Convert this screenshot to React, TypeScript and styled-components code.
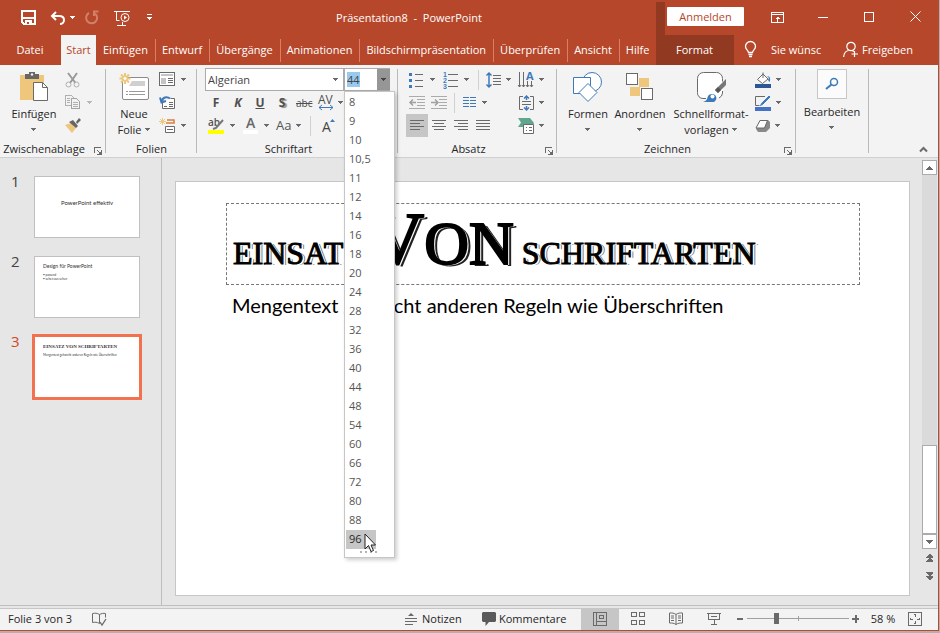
import React, { useEffect, useRef, useState } from "react";
import styled, { createGlobalStyle, css } from "styled-components";

const red = "#b7472a";
const darkRed = "#923921";
const ink = "#262626";
const grey = "#6a6a6a";
const blue = "#3f7ab8";
const sand = "#eec77c";

const GlobalStyle = createGlobalStyle`
  * { box-sizing: border-box; }
  body { margin: 0; background: #b4b0ae; }
  body, button, input, select {
    font-family: "Open Sans", "Noto Sans", sans-serif;
    font-size: 11px;
    color: ${ink};
  }
  button, input, select { margin: 0; padding: 0; border: 0; background: none; border-radius: 0; }
  svg { display: block; flex: none; overflow: visible; }
`;

/* ---------- window ---------- */

const Desktop = styled.div`
  min-height: 100vh;
  display: flex;
  padding: 0 1px 2px 0;
`;
const Window = styled.div`
  flex: 1;
  min-width: 0;
  display: flex;
  flex-direction: column;
  background: #e6e6e6;
  border: solid #c0452a;
  border-width: 0 1px 1px 0;
`;

/* ---------- title bar ---------- */

const TitleBar = styled.header`
  display: flex;
  height: 35px;
  background: ${red};
  color: #fff;
`;
const QuickAccess = styled.div`
  display: flex;
  align-items: center;
  width: 162px;
  padding-left: 21px;
`;
const QuickButton = styled.button<{ $w: number }>`
  display: flex;
  align-items: center;
  gap: 4px;
  width: ${(p) => p.$w}px;
  height: 28px;
  color: #fff;
`;
const Title = styled.h1`
  flex: 1;
  margin: 0;
  font-size: 11px;
  font-weight: 400;
  line-height: 35px;
  text-align: center;
  white-space: pre;
`;
const TitleRight = styled.div`
  display: flex;
  align-items: flex-end;
`;
const ContextStripe = styled.div`
  width: 9px;
  height: 33px;
  background: ${darkRed};
`;
const SignIn = styled.button`
  align-self: flex-start;
  width: 77px;
  height: 19px;
  margin: 7px 10px 0 2px;
  background: #fff;
  color: ${red};
  border-radius: 1px;
  font-size: 11px;
  line-height: 18px;
`;
const WindowButton = styled.button`
  display: grid;
  place-items: center;
  width: 46px;
  height: 35px;
  color: #fff;
`;

/* ---------- tabs ---------- */

const TabRow = styled.div`
  display: flex;
  height: 30px;
  background: ${red};
  color: #fff;
`;
const Tabs = styled.nav`
  flex: 1;
  display: flex;
  align-items: center;
  min-width: 0;
`;
const Tab = styled.button<{ $kind?: "file" | "active" | "context" }>`
  flex: none;
  height: 23px;
  padding: 0 7px 1px 6px;
  color: #fff;
  line-height: 22px;
  white-space: nowrap;
  border-right: 1px solid #dc7d66;
  ${(p) => p.$kind === "file" && css`width: 61px; border: 0;`}
  ${(p) =>
    p.$kind === "active" &&
    css`
      width: 35px;
      height: 30px;
      padding: 0 0 1px;
      margin-right: 1px;
      background: #f3f3f3;
      color: ${red};
      border: 0;
    `}
  ${(p) =>
    p.$kind === "context" &&
    css`
      width: 78px;
      height: 30px;
      background: ${darkRed};
      border: 0;
    `}
`;
const HeaderAction = styled.button<{ $w: number; $gap: number }>`
  display: flex;
  align-items: center;
  gap: ${(p) => p.$gap}px;
  width: ${(p) => p.$w}px;
  padding: 0 12px 1px 10px;
  color: #fff;
  white-space: nowrap;
`;
const Clip = styled.span`
  overflow: hidden;
`;

/* ---------- ribbon ---------- */

const Ribbon = styled.section`
  display: flex;
  height: 93px;
  background: #f3f3f3;
  border-bottom: 1px solid #d0d0d0;
`;
const Group = styled.div<{ $w: number; $pad: number }>`
  position: relative;
  display: flex;
  flex-direction: column;
  width: ${(p) => p.$w}px;
  padding: 3px 0 0 ${(p) => p.$pad}px;
  &::after {
    content: "";
    position: absolute;
    top: 4px;
    right: 0;
    width: 1px;
    height: 84px;
    background: #b9b9b9;
  }
`;
const GroupBody = styled.div`
  display: flex;
  height: 70px;
`;
const GroupFooter = styled.div<{ $pad: number }>`
  display: flex;
  align-items: center;
  justify-content: center;
  height: 19px;
  margin-left: -${(p) => p.$pad}px;
  padding-top: 3px;
`;
const GroupLabel = styled.span`
  flex: 1;
  text-align: center;
  line-height: 16px;
  white-space: nowrap;
`;
const Launcher = styled.button`
  width: 15px;
  height: 12px;
  margin-right: 3px;
  padding: 3px 0 0 6px;
`;
const LargeButton = styled.button<{ $w: number }>`
  display: flex;
  flex-direction: column;
  align-items: center;
  width: ${(p) => p.$w}px;
  line-height: 16px;
  white-space: nowrap;
`;
const LargeIcon = styled.span`
  display: grid;
  place-items: center;
  height: 38px;
`;
const Line = styled.span`
  display: flex;
  align-items: center;
  justify-content: center;
  gap: 3px;
  height: 16px;
`;
const Column = styled.div`
  display: flex;
  flex-direction: column;
`;
const Row = styled.div`
  display: flex;
  align-items: center;
  height: 23px;
`;
const Tool = styled.button<{ $w?: number; $active?: boolean; $gap?: number }>`
  display: flex;
  align-items: center;
  gap: ${(p) => p.$gap ?? 5}px;
  width: ${(p) => p.$w ?? 34}px;
  height: 23px;
  padding-left: 3px;
  background: ${(p) => (p.$active ? "#c6c6c6" : "none")};
`;
const Glyph = styled.span<{ $look?: "bold" | "italic" | "underline" | "shadow" | "strike" }>`
  width: 16px;
  color: #4f4f4f;
  font-size: 12px;
  line-height: 16px;
  text-align: center;
  font-weight: 700;
  ${(p) => p.$look === "italic" && css`font-style: italic;`}
  ${(p) => p.$look === "underline" && css`text-decoration: underline;`}
  ${(p) => p.$look === "shadow" && css`text-shadow: 2px 1px 1px #8a8a8a;`}
  ${(p) => p.$look === "strike" && css`font-size: 10px; font-weight: 400; text-decoration: line-through;`}
`;
const Divider = styled.span<{ $left?: number; $right?: number }>`
  width: 1px;
  height: 20px;
  margin: 0 ${(p) => p.$right ?? 0}px 0 ${(p) => p.$left ?? 0}px;
  background: #d0d0d0;
`;
const Combos = styled.div`
  display: flex;
  height: 23px;
`;
const FontSelectBox = styled.label`
  display: grid;
  grid-template-columns: 1fr 14px;
  align-items: center;
  width: 139px;
  height: 23px;
  background: #fff;
  border: 1px solid #ababab;
`;
const FontSelect = styled.select`
  grid-area: 1 / 1 / 2 / 3;
  height: 21px;
  padding-left: 2px;
  appearance: none;
  color: #444;
`;
const SelectCaret = styled.span`
  grid-area: 1 / 2;
  display: grid;
  place-items: center;
  pointer-events: none;
`;
const SizeBox = styled.div`
  position: relative;
  display: flex;
  width: 46px;
  height: 23px;
  background: #fff;
  border: 1px solid #ababab;
  border-right: 0;
`;
const SizeInput = styled.input`
  flex: 1;
  min-width: 0;
  padding-left: 2px;
  outline: 0;
  color: #444;
  &::selection { background: #99c9ef; color: #444; }
`;
const SizeToggle = styled.button`
  display: grid;
  place-items: center;
  width: 13px;
  background: #969696;
`;
const SizeList = styled.ul`
  position: absolute;
  z-index: 5;
  top: 22px;
  left: -1px;
  width: 51px;
  margin: 0;
  padding: 1px 1px 8px;
  list-style: none;
  background: #fff;
  border: 1px solid #c6c6c6;
  box-shadow: 2px 2px 4px rgba(0, 0, 0, 0.2);
`;
const SizeOption = styled.li<{ $active: boolean }>`
  position: relative;
  width: 30px;
  height: 19px;
  padding-left: 3px;
  line-height: 18px;
  color: ${(p) => (p.$active ? ink : "#555")};
  background: ${(p) => (p.$active ? "#c6c6c6" : "none")};
`;
const Grip = styled.span`
  position: absolute;
  bottom: 4px;
  left: 15px;
`;
const Pointer = styled.span`
  position: absolute;
  z-index: 6;
  top: 3px;
  left: 18px;
`;
const SearchTile = styled.span`
  display: grid;
  place-items: center;
  width: 30px;
  height: 30px;
  margin: 1px 0 5px;
  background: #fbfbfb;
  border: 1px solid #c6c6c6;
`;
const CollapseArea = styled.div`
  flex: 1;
  display: flex;
  align-items: flex-end;
  justify-content: flex-end;
  padding: 0 10px 4px 0;
`;

/* ---------- workspace ---------- */

const Workspace = styled.main`
  flex: 1;
  display: flex;
  margin-bottom: 2px;
  border-bottom: 1px solid #c0c0c0;
`;
const Slides = styled.ol`
  width: 162px;
  margin: 0;
  padding: 18px 0 0;
  list-style: none;
  border-right: 1px solid #bdbdbd;
`;
const SlideItem = styled.li<{ $current?: boolean }>`
  display: flex;
  height: 80px;
  padding-left: 11px;
  color: ${(p) => (p.$current ? "#d24726" : "#444")};
`;
const SlideNumber = styled.span`
  width: 23px;
  font-size: 15px;
  line-height: 10px;
`;
const Thumb = styled.button<{ $current?: boolean }>`
  display: flex;
  flex-direction: column;
  align-items: flex-start;
  width: 106px;
  height: 62px;
  padding: 7px 8px 0;
  background: #fff;
  border: 1px solid ${(p) => (p.$current ? "#f27250" : "#c0c0c0")};
  outline: ${(p) => (p.$current ? "2px solid #f27250" : "0")};
  text-align: left;
  white-space: nowrap;
`;
const ThumbText = styled.span<{ $size: number; $gap?: number; $center?: boolean; $serif?: boolean }>`
  margin-top: ${(p) => p.$gap ?? 0}px;
  align-self: ${(p) => (p.$center ? "center" : "flex-start")};
  font-family: ${(p) => (p.$serif ? '"Liberation Serif", serif' : "Lato, sans-serif")};
  font-weight: ${(p) => (p.$serif ? 700 : 400)};
  font-size: ${(p) => p.$size}px;
  line-height: ${(p) => p.$size}px;
  color: #333;
`;
const Canvas = styled.div`
  flex: 1;
  display: flex;
  padding: 23px 12px 9px 13px;
`;
const Slide = styled.article`
  flex: 1;
  padding: 21px 49px 0 50px;
  background: #fff;
  border: 1px solid #c6c6c6;
  color: #000;
`;
const Headline = styled.h2`
  height: 82px;
  margin: 0;
  padding: 0 6px;
  border: 1px dashed #777;
  font-family: "Liberation Serif", serif;
  font-size: 32px;
  font-weight: 400;
  line-height: 98px;
  white-space: pre;
  -webkit-text-stroke: 1px #000;
  text-shadow: 2px 1px 0 #fff, 3px 1px 0 #777;
`;
const HeadlineBig = styled.span<{ $size: number }>`
  font-size: ${(p) => p.$size}px;
  line-height: 0;
  -webkit-text-stroke: 2px #000;
  text-shadow: 2px 1px 0 #fff, 4px 2px 0 #222;
`;
const BodyText = styled.p`
  margin: 7px 0 0;
  padding: 0 6px;
  font-family: Lato, sans-serif;
  font-size: 20px;
  line-height: 26px;
  white-space: nowrap;
`;
const ScrollBar = styled.div`
  display: flex;
  flex-direction: column;
  align-items: stretch;
  width: 16px;
  padding: 2px 1px 20px 0;
`;
const ScrollButton = styled.button`
  display: grid;
  place-items: center;
  height: 15px;
  background: #fff;
  border: 1px solid #ababab;
`;
const ScrollTrack = styled.div`
  flex: 1;
  display: flex;
  flex-direction: column;
  justify-content: flex-end;
  background: #dadada;
`;
const ScrollThumb = styled.div`
  height: 89px;
  background: #fff;
  border: 1px solid #ababab;
`;
const SlideStep = styled.button`
  display: grid;
  place-items: center;
  height: 18px;
`;

/* ---------- status bar ---------- */

const StatusBar = styled.footer`
  display: flex;
  align-items: center;
  height: 22px;
  padding: 0 11px 0 8px;
  background: #f3f3f3;
  border-top: 1px solid #c6c6c6;
`;
const StatusText = styled.span`
  margin-right: 20px;
  padding-bottom: 2px;
`;
const StatusSpacer = styled.span`
  flex: 1;
`;
const StatusButton = styled.button<{ $w: number; $gap: number }>`
  display: flex;
  align-items: center;
  gap: ${(p) => p.$gap}px;
  width: ${(p) => p.$w}px;
  height: 21px;
  padding-bottom: 2px;
`;
const ViewButton = styled.button<{ $w: number; $active?: boolean }>`
  display: grid;
  place-items: center;
  width: ${(p) => p.$w}px;
  height: 21px;
  padding-bottom: 2px;
  background: ${(p) => (p.$active ? "#c6c6c6" : "none")};
`;
const ZoomSlider = styled.input`
  width: 102px;
  height: 13px;
  margin-bottom: 2px;
  appearance: none;
  background:
    linear-gradient(#a0a0a0, #a0a0a0) center / 1px 5px no-repeat,
    linear-gradient(#a0a0a0, #a0a0a0) center / 100% 1px no-repeat;
  &::-webkit-slider-thumb {
    appearance: none;
    width: 5px;
    height: 11px;
    background: ${grey};
  }
`;
const ZoomValue = styled.output`
  width: 40px;
  padding-bottom: 2px;
  text-align: center;
`;

/* ---------- icons ---------- */

type IconProps = { w: number; h: number; children: React.ReactNode; smooth?: boolean };
const Icon = ({ w, h, children, smooth }: IconProps) => (
  <svg
    width={w}
    height={h}
    viewBox={`0 0 ${w} ${h}`}
    fill="none"
    stroke={grey}
    shapeRendering={smooth ? "auto" : "crispEdges"}
    aria-hidden
  >
    {children}
  </svg>
);

const Caret = ({ color = grey }: { color?: string }) => (
  <Icon w={6} h={4}>
    <path d="M0 0h5v1H0zM1 1h3v1H1zM2 2h1v1H2z" fill={color} stroke="none" />
  </Icon>
);

const SaveIcon = () => (
  <Icon w={15} h={15}>
    <path d="M1 1h13v13H3l-2-2z" stroke="#fff" strokeWidth="2" />
    <path d="M1 7h13v2H1zM4 10h7v5H4z" fill="#fff" stroke="none" />
    <path d="M6 12h2v2H6z" fill={red} stroke="none" />
  </Icon>
);
const UndoIcon = () => (
  <Icon w={16} h={14} smooth>
    <path d="M6 1 2 5l4 4M2 5h7c3 0 5 1.500 5 4s-2 4-4 4" stroke="#fff" strokeWidth="2" />
  </Icon>
);
const RedoIcon = () => (
  <Icon w={15} h={15} smooth>
    <path d="M10 3.500A5.500 5.500 0 1 1 4 3M13.500 1.500H9v4.500" stroke="#d1806a" strokeWidth="2" />
  </Icon>
);
const ShowIcon = () => (
  <Icon w={17} h={16} smooth>
    <path d="M0 1.500h16M2.500 2v8.500h3M3 15.500h9M8.500 12v3" stroke="#fff" />
    <circle cx="11" cy="7.500" r="4" stroke="#fff" />
    <path d="M10 5.500v4l3-2z" fill="#fff" stroke="none" />
  </Icon>
);
const CustomizeIcon = () => (
  <Icon w={6} h={7}>
    <path d="M0 0h5v1H0zM0 3h5v1H0zM1 4h3v1H1zM2 5h1v1H2z" fill="#fff" stroke="none" />
  </Icon>
);
const RibbonOptionsIcon = () => (
  <Icon w={13} h={11}>
    <path d="M.5.5h12v10H.5zM1 2.500h11M6.500 4.500v5M4.500 6.500h4M5.500 5.500h2" stroke="#fff" />
  </Icon>
);
const BulbIcon = () => (
  <Icon w={13} h={17} smooth>
    <path d="M4.500 11.500c0-2-3-3-3-6a5 5 0 0 1 10 0c0 3-3 4-3 6zM4.500 13.500h4M5 15.500h3" stroke="#fff" strokeWidth="1.300" />
  </Icon>
);
const ShareIcon = () => (
  <Icon w={16} h={17} smooth>
    <circle cx="8" cy="5.500" r="4.200" stroke="#fff" strokeWidth="1.200" />
    <path d="M.6 16c.4-4 2-6 5-6.500M9 9.500l2 1M11.500 10v6M8.500 13h6.500" stroke="#fff" strokeWidth="1.200" />
  </Icon>
);
const PasteIcon = () => (
  <Icon w={30} h={32} smooth>
    <path d="M1 4h24v25H1z" fill={sand} stroke="none" />
    <path d="M6 3h4V1h6v2h4v5H6z" fill="#666" stroke="none" />
    <circle cx="13" cy="3.500" r="1.200" fill="#f3f3f3" stroke="none" />
    <path d="M14.500 11.500h9l5 5v13h-14z" fill="#fff" />
    <path d="M23.500 11.500v5h5" />
  </Icon>
);
const CutIcon = () => (
  <Icon w={16} h={16} smooth>
    <path d="M3 1l7.500 10M12 1 5 11" stroke="#9a9a9a" strokeWidth="2" />
    <circle cx="3.500" cy="12.500" r="2.500" stroke="#b0b0b0" />
    <circle cx="11.500" cy="12.500" r="2.500" stroke="#b0b0b0" />
  </Icon>
);
const CopyIcon = () => (
  <Icon w={17} h={15}>
    <path d="M.5.500h6l2 2v8h-8zM2 3.500h3M2 5.500h3M2 7.500h3" stroke="#b0b0b0" />
    <path d="M6.500 3.500h5l3 3v7h-8z" fill="#f3f3f3" stroke="#a4a4a4" />
    <path d="M8 7.500h5M8 9.500h5M8 11.500h5" stroke="#b0b0b0" />
  </Icon>
);
const BrushIcon = () => (
  <Icon w={17} h={15} smooth>
    <path d="M0 7l6-2 5 5-4 5z" fill={sand} stroke="none" />
    <path d="M4 4l4-2 5 6-2 2zM11 4l3-4 2 2-4 4z" fill="#666" stroke="none" />
  </Icon>
);
const NewSlideIcon = () => (
  <Icon w={31} h={30} smooth>
    <rect x="3.500" y="5.500" width="26" height="22" rx="1.500" fill="#fff" stroke="#8a8a8a" />
    <path d="M13 9h13v5H10z" fill="#d0d0d0" stroke="none" />
    <path d="M7 19.500h19M7 22.500h19" stroke="#9a9a9a" strokeDasharray="2 1 16" />
    <path d="M6 1v11M.5 6.500h11M2 2.500l8 8M10 2.500l-8 8" stroke={sand} strokeWidth="2" />
    <circle cx="6" cy="6.500" r="2" fill="#fff" stroke={sand} />
  </Icon>
);
const LayoutIcon = () => (
  <Icon w={17} h={15}>
    <path d="M.5.5h15v13H.5z" fill="#fff" />
    <path d="M2 2h12v2H2zM2 6h5v6H2z" fill="#c4c4c4" stroke="none" />
    <path d="M9 6.500h5M9 8.500h5M9 10.500h5" />
  </Icon>
);
const ResetIcon = () => (
  <Icon w={17} h={15} smooth>
    <path d="M3.500 7.500v6h12v-10h-4" fill="#fff" />
    <path d="M10 7.500h4M10 9.500h4M10 11.500h4M5 11.500h3" />
    <path d="M3 7c0-5 5-6 8-3.500M1 2.500 2.500 7.500 7 6" stroke={blue} strokeWidth="2" />
  </Icon>
);
const SectionIcon = () => (
  <Icon w={17} h={16} smooth>
    <path d="M3.500 0v7M0 3.500h7M1 1l5 5M6 1 1 6" stroke={sand} />
    <path d="M8 2h7v3H7" stroke="#dd7d3c" strokeWidth="1.500" />
    <path d="M6.500 8.500h9v6h-9z" fill="#fff" />
    <path d="M8 11.500h6" />
  </Icon>
);
const SpacingGlyph = () => (
  <Icon w={16} h={16} smooth>
    <text x="0" y="9" fontSize="12" fontFamily="Open Sans" fill="#4f4f4f" stroke="none">AV</text>
    <path d="M1 12.500h14M4 10l-3 2.500L4 15M12 10l3 2.500-3 2.500" stroke={blue} />
  </Icon>
);
const HighlightIcon = () => (
  <Icon w={17} h={16} smooth>
    <text x="0" y="8" fontSize="10" fontWeight="600" fontFamily="Open Sans" fill="#4f4f4f" stroke="none">ab</text>
    <path d="M15 2 8 10l-3 1" stroke="#777" strokeWidth="2" />
    <path d="M0 12h16v4H0z" fill="#ff0" stroke="none" />
  </Icon>
);
const FontColorIcon = () => (
  <Icon w={17} h={16} smooth>
    <text x="4" y="10" fontSize="14" fontWeight="600" fontFamily="Open Sans" fill="#666" stroke="none">A</text>
    <path d="M1 12h15v4H1z" fill="#fff" stroke="none" />
  </Icon>
);
const CaseIcon = () => (
  <Icon w={17} h={16} smooth>
    <text x="0" y="12" fontSize="13" fontFamily="Open Sans" fill="#555" stroke="none">Aa</text>
  </Icon>
);
const GrowIcon = () => (
  <Icon w={16} h={16} smooth>
    <text x="2" y="14" fontSize="14" fontFamily="Open Sans" fill="#444" stroke="none">A</text>
    <path d="M10 4h5l-2.500-3z" fill={blue} stroke="none" />
  </Icon>
);

const Lines = ({ d, color }: { d: string; color?: string }) => (
  <Icon w={16} h={15}>
    <path d={d} stroke={color ?? grey} />
  </Icon>
);
const BulletsIcon = () => (
  <Icon w={16} h={16}>
    <path d="M0 1h3v3H0zM0 7h3v3H0zM0 13h3v3H0z" fill={blue} stroke="none" />
    <path d="M6 2.500h8M6 8.500h8M6 14.500h8" />
  </Icon>
);
const NumberingIcon = () => (
  <Icon w={16} h={16} smooth>
    <g fontSize="7" fontWeight="700" fontFamily="Liberation Sans" fill={blue} stroke="none">
      <text x="0" y="5">1</text>
      <text x="0" y="11">2</text>
      <text x="0" y="17">3</text>
    </g>
    <path d="M5 2.500h10M5 8.500h10M5 14.500h10" />
  </Icon>
);
const LineSpacingIcon = () => (
  <Icon w={16} h={16} smooth>
    <path d="M3 1v14M.5 3.500 3 1l2.500 2.500M.5 12.500 3 15l2.500-2.500" stroke={blue} strokeWidth="1.500" />
    <path d="M7 3.500h8M7 6.500h8M7 9.500h8M7 12.500h8" />
  </Icon>
);
const DirectionIcon = () => (
  <Icon w={17} h={16} smooth>
    <path d="M1.500 0v15M5.500 0v15M9.500 9v6M13.500 9v6M0 13l1.500 2L3 13M4 13l1.500 2L7 13M8 13l1.500 2 1.500-2M12 13l1.500 2 1.500-2" />
    <text x="8" y="8" fontSize="11" fontWeight="700" fontFamily="Open Sans" fill={blue} stroke="none">A</text>
  </Icon>
);
const IndentIcon = ({ flip }: { flip?: boolean }) => (
  <Icon w={16} h={14} smooth>
    <path d="M0 .5h16M8 3.500h8M8 6.500h8M8 9.500h8M0 12.500h16" stroke="#ababab" />
    <path d={flip ? "M0 6.500h6M4 3.500l3 3-3 3" : "M1 6.500h6M4 3.500l-3 3 3 3"} stroke="#a0a0a0" strokeWidth="1.500" />
  </Icon>
);
const ColumnsIcon = () => (
  <Lines d="M1 2.500h6M1 5.500h6M1 8.500h6M1 11.500h6M8 2.500h6M8 5.500h6M8 8.500h6M8 11.500h6" color={blue} />
);
const AlignTextIcon = () => (
  <Icon w={17} h={16} smooth>
    <path d="M5 1.500H1.500v13H5M12 1.500h3.500v13H12M4 6.500h9M4 9.500h9" />
    <path d="M8.500 5V1M6 3.500 8.500 1 11 3.500M8.500 11v4M6 12.500 8.500 15l2.500-2.500" stroke={blue} strokeWidth="1.500" />
  </Icon>
);
const SmartArtIcon = () => (
  <Icon w={17} h={16} smooth>
    <path d="M0 0h12l4 5-2 4H0l3-4.500z" fill="#5fa78c" stroke="none" />
    <path d="M5.500 6.500h10v9h-10z" fill="#fff" />
    <path d="M8 9.500h1M11 9.500h3M8 12.500h1M11 12.500h3" />
  </Icon>
);
const ShapesIcon = () => (
  <Icon w={30} h={30} smooth>
    <circle cx="19" cy="10" r="9.500" fill="#fff" stroke={blue} />
    <path d="M.5 5.500h17v16H.5z" fill="#fff" stroke={blue} />
    <path d="M15 11.500 24 20.500 15 29.500 6 20.500z" fill="#fff" stroke={blue} />
  </Icon>
);
const ArrangeIcon = () => (
  <Icon w={28} h={28}>
    <path d="M13 5h10v9h-9v9H4v-9h9z" fill={sand} stroke="none" />
    <path d="M.5.5h11v11H.5zM15.500 15.500h11v11h-11z" fill="#fff" />
  </Icon>
);
const StylesIcon = () => (
  <Icon w={31} h={32} smooth>
    <rect x="1.500" y="1.500" width="25" height="26" rx="6" fill="#fff" stroke="none" />
    <path d="M10 27.500H7a5.500 5.500 0 0 1-5.500-6V7.500a6 6 0 0 1 6-6h13a6 6 0 0 1 6 6v3M26.500 20v2a6 6 0 0 1-3.500 5" />
    <path d="M30 8v6l-8 8-3-3z" fill="#777" stroke="none" />
    <path d="M22 16l3 3-3 3-3-3z" fill="#555" stroke="none" />
    <path d="M7 31c4-1 4-3 5-6 1-2 5-3 7-1s2 5-1 7z" fill={blue} stroke="none" />
    <circle cx="16.500" cy="25.500" r="2" fill="#fff" stroke="none" />
  </Icon>
);
const FillIcon = () => (
  <Icon w={17} h={16} smooth>
    <path d="M2.500 7.500 8 2l5 5-5.500 4.500z" fill="#fff" />
    <path d="M8 6V.5" />
    <path d="M12 4c3 0 4 3 2.500 6C13 9 12.500 7 14 6z" fill={blue} stroke="none" />
    <path d="M0 12h16v4H0z" fill="#2b5797" stroke="none" />
  </Icon>
);
const OutlineIcon = () => (
  <Icon w={17} h={16} smooth>
    <path d="M10 1.500H.5v9h4" />
    <path d="M14 1 7 8l-1.500 2.500L8 9l7-7z" fill={blue} stroke={blue} />
    <path d="M0 12h16v4H0z" fill="#4472c4" stroke="none" />
  </Icon>
);
const EffectsIcon = () => (
  <Icon w={16} h={14} smooth>
    <path d="M5 1h8l2 2v6l-4 4H3L1 10z" fill="#8a8a8a" stroke="none" />
    <path d="M5 1.500h7.500L9.500 9H1z" fill="#fff" />
  </Icon>
);
const SearchIcon = () => (
  <Icon w={14} h={14} smooth>
    <circle cx="9" cy="5" r="3.500" stroke={blue} strokeWidth="1.500" />
    <path d="M6.500 7.500 1 12" stroke={blue} strokeWidth="2" />
  </Icon>
);
const LauncherIcon = () => (
  <Icon w={8} h={8}>
    <path d="M.5 6V.5H7M3 3l3 3M7.500 3v4.500H3" />
    <path d="M5 5h2v2H5z" fill={grey} stroke="none" />
  </Icon>
);
const PointerIcon = () => (
  <Icon w={13} h={20} smooth>
    <path d="M1 1v15l3.500-3.500L7 18.500l2.500-1L7 12h4.500z" fill="#fff" stroke="#222" />
  </Icon>
);
const Triangle = ({ up }: { up?: boolean }) => (
  <Icon w={7} h={4}>
    <path
      d={up ? "M3 0h1v1H3zM2 1h3v1H2zM1 2h5v1H1zM0 3h7v1H0z" : "M0 0h7v1H0zM1 1h5v1H1zM2 2h3v1H2zM3 3h1v1H3z"}
      fill={grey}
      stroke="none"
    />
  </Icon>
);
const DoubleTriangle = ({ up }: { up?: boolean }) => (
  <Icon w={7} h={9}>
    <path d={up ? "M3 0h1l3 3v1H0V3zM3 4h1l3 3v1H0V7z" : "M0 0h7v1L4 4H3L0 1zM0 4h7v1L4 8H3L0 5z"} fill={grey} stroke="none" />
  </Icon>
);
const SpellIcon = () => (
  <Icon w={15} h={16} smooth>
    <path d="M7.500 2.500C5 1 3 1 .5 1.500v9c2.500-.5 4.500-.5 7 1M7.500 2.500v9M7.500 2.500c2-1 4-1.500 6-1v4" />
    <path d="M8 10l2 3 4-6" strokeWidth="1.300" />
  </Icon>
);
const NotesIcon = () => (
  <Icon w={12} h={13} smooth>
    <path d="M3 4h6L6 1z" fill={grey} stroke="none" />
    <path d="M0 6.500h12M0 9.500h12M0 12.500h8" />
  </Icon>
);
const CommentIcon = () => (
  <Icon w={14} h={14} smooth>
    <path d="M1 0h12l1 1v8l-1 1H7l-3.500 4v-4H1L0 9V1z" fill="#5a5a5a" stroke="none" />
  </Icon>
);
const NormalViewIcon = () => (
  <Icon w={14} h={14}>
    <path d="M.5.5h13v13H.5zM3.500 1v12M4 9.500h9M6.500 3.500h4v3h-4z" />
  </Icon>
);
const SorterIcon = () => (
  <Icon w={14} h={14}>
    <path d="M.5.5h5v4h-5zM8.500.5h5v4h-5zM.5 8.500h5v4h-5zM8.500 8.500h5v4h-5z" />
  </Icon>
);
const ReadingIcon = () => (
  <Icon w={14} h={14} smooth>
    <path d="M7 2.500C5 1 3 .8.500 1v10c2.500 0 4.500 0 6.500 1.500 2-1.500 4-1.500 6.500-1.500V1C11 .8 9 1 7 2.500zM7 2.500v10M2 4h3M2 6h3M2 8.500h3M9 4h3M9 6h3M9 8.500h3" />
  </Icon>
);
const PresentIcon = () => (
  <Icon w={14} h={14}>
    <path d="M0 1.500h14M1.500 2v5.500h11V2M4 4.500h6M7 8v5M4 12.500h6" />
  </Icon>
);
const FitIcon = () => (
  <Icon w={14} h={14}>
    <path d="M.5.5h13v13H.5zM7 2v3M7 9v3M2 7h3M9 7h3M6 2.500h2M6 11.500h2M2.500 6v2M11.500 6v2" />
  </Icon>
);

/* ---------- composition ---------- */

type RibbonGroupProps = { label: string; w: number; pad?: number; launcher?: boolean; children: React.ReactNode };
const RibbonGroup = ({ label, w, pad = 0, launcher, children }: RibbonGroupProps) => (
  <Group $w={w} $pad={pad} role="group" aria-label={label || undefined}>
    <GroupBody>{children}</GroupBody>
    <GroupFooter $pad={pad}>
      <GroupLabel>{label}</GroupLabel>
      {launcher && (
        <Launcher aria-label={`${label} öffnen`}>
          <LauncherIcon />
        </Launcher>
      )}
    </GroupFooter>
  </Group>
);

const tabs = ["Einfügen", "Entwurf", "Übergänge", "Animationen", "Bildschirmpräsentation", "Überprüfen", "Ansicht", "Hilfe"];
const sizes = [
  "8", "9", "10", "10,5", "11", "12", "14", "16", "18", "20", "24", "28",
  "32", "36", "40", "44", "48", "54", "60", "66", "72", "80", "88", "96",
];

const SizePicker = () => {
  const field = useRef<HTMLInputElement>(null);
  const [size, setSize] = useState("44");
  useEffect(() => {
    field.current?.focus();
    field.current?.select();
  }, []);
  return (
    <SizeBox>
      <SizeInput
        ref={field}
        role="combobox"
        aria-label="Schriftgrad"
        aria-expanded
        aria-controls="size-list"
        value={size}
        onChange={(e) => setSize(e.target.value)}
      />
      <SizeToggle aria-label="Schriftgrade anzeigen">
        <Caret color="#444" />
      </SizeToggle>
      <SizeList id="size-list" role="listbox">
        {sizes.map((s) => (
          <SizeOption key={s} role="option" aria-selected={s === "96"} $active={s === "96"} onClick={() => setSize(s)}>
            {s}
            {s === "96" && (
              <Pointer>
                <PointerIcon />
              </Pointer>
            )}
          </SizeOption>
        ))}
        <Grip>
          <Icon w={18} h={2}>
            <path d="M0 0h2v2H0zM5 0h2v2H5zM10 0h2v2h-2zM15 0h2v2h-2z" fill="#b0b4bc" stroke="none" />
          </Icon>
        </Grip>
      </SizeList>
    </SizeBox>
  );
};

const App = () => {
  const [zoom, setZoom] = useState(28);
  return (
    <>
      <GlobalStyle />
      <Desktop>
        <Window>
          <TitleBar>
            <QuickAccess>
              <QuickButton $w={29} aria-label="Speichern"><SaveIcon /></QuickButton>
              <QuickButton $w={35} aria-label="Rückgängig"><UndoIcon /><Caret color="#fff" /></QuickButton>
              <QuickButton $w={29} aria-label="Wiederholen"><RedoIcon /></QuickButton>
              <QuickButton $w={33} aria-label="Von Beginn an"><ShowIcon /></QuickButton>
              <QuickButton $w={12} aria-label="Symbolleiste anpassen"><CustomizeIcon /></QuickButton>
            </QuickAccess>
            <Title>{"Präsentation8  -  PowerPoint"}</Title>
            <TitleRight>
              <ContextStripe />
              <SignIn>Anmelden</SignIn>
              <WindowButton aria-label="Menübandoptionen"><RibbonOptionsIcon /></WindowButton>
              <WindowButton aria-label="Minimieren">
                <Icon w={10} h={10}><path d="M0 4.500h10" stroke="#fff" /></Icon>
              </WindowButton>
              <WindowButton aria-label="Maximieren">
                <Icon w={10} h={12}><path d="M.5.5h9v9h-9z" stroke="#fff" /></Icon>
              </WindowButton>
              <WindowButton aria-label="Schließen">
                <Icon w={11} h={13} smooth><path d="M.5.5l10 10M10.500.5l-10 10" stroke="#fff" /></Icon>
              </WindowButton>
            </TitleRight>
          </TitleBar>

          <TabRow>
            <Tabs>
              <Tab $kind="file">Datei</Tab>
              <Tab $kind="active">Start</Tab>
              {tabs.map((t) => <Tab key={t}>{t}</Tab>)}
            </Tabs>
            <Tab $kind="context">Format</Tab>
            <HeaderAction $w={99} $gap={14}><BulbIcon /><Clip>Sie wünschen</Clip></HeaderAction>
            <HeaderAction $w={105} $gap={3}><ShareIcon />Freigeben</HeaderAction>
          </TabRow>

          <Ribbon>
            <RibbonGroup label="Zwischenablage" w={106} pad={6} launcher>
              <LargeButton $w={56}>
                <LargeIcon><PasteIcon /></LargeIcon>
                <Line>Einfügen</Line>
                <Line><Caret /></Line>
              </LargeButton>
              <Column>
                <Tool aria-label="Ausschneiden"><CutIcon /></Tool>
                <Tool aria-label="Kopieren"><CopyIcon /><Caret color="#b8b8b8" /></Tool>
                <Tool aria-label="Format übertragen"><BrushIcon /></Tool>
              </Column>
            </RibbonGroup>

            <RibbonGroup label="Folien" w={91} pad={6}>
              <LargeButton $w={44}>
                <LargeIcon><NewSlideIcon /></LargeIcon>
                <Line>Neue</Line>
                <Line>Folie<Caret /></Line>
              </LargeButton>
              <Column>
                <Tool aria-label="Layout"><LayoutIcon /><Caret /></Tool>
                <Tool aria-label="Zurücksetzen"><ResetIcon /></Tool>
                <Tool aria-label="Abschnitt"><SectionIcon /><Caret /></Tool>
              </Column>
            </RibbonGroup>

            <RibbonGroup label="Schriftart" w={201} pad={8} launcher>
              <Column>
                <Combos>
                  <FontSelectBox>
                    <FontSelect aria-label="Schriftart" defaultValue="Algerian">
                      <option>Algerian</option>
                    </FontSelect>
                    <SelectCaret><Caret /></SelectCaret>
                  </FontSelectBox>
                  <SizePicker />
                </Combos>
                <Row>
                  <Tool $w={22} aria-label="Fett"><Glyph $look="bold">F</Glyph></Tool>
                  <Tool $w={22} aria-label="Kursiv"><Glyph $look="italic">K</Glyph></Tool>
                  <Tool $w={22} aria-label="Unterstrichen"><Glyph $look="underline">U</Glyph></Tool>
                  <Tool $w={22} aria-label="Textschatten"><Glyph $look="shadow">S</Glyph></Tool>
                  <Tool $w={22} aria-label="Durchgestrichen"><Glyph $look="strike">abc</Glyph></Tool>
                  <Tool $w={34} $gap={4} aria-label="Zeichenabstand"><SpacingGlyph /><Caret /></Tool>
                </Row>
                <Row>
                  <Tool $w={34} aria-label="Texthervorhebung"><HighlightIcon /><Caret /></Tool>
                  <Tool $w={34} aria-label="Schriftfarbe"><FontColorIcon /><Caret /></Tool>
                  <Tool $w={34} $gap={3} aria-label="Groß-/Kleinschreibung"><CaseIcon /><Caret /></Tool>
                  <Divider $left={3} $right={6} />
                  <Tool $w={22} aria-label="Schrift vergrößern"><GrowIcon /></Tool>
                </Row>
              </Column>
            </RibbonGroup>

            <RibbonGroup label="Absatz" w={159} pad={8} launcher>
              <Column>
                <Row>
                  <Tool aria-label="Aufzählung"><BulletsIcon /><Caret /></Tool>
                  <Tool aria-label="Nummerierung"><NumberingIcon /><Caret /></Tool>
                  <Divider $left={4} $right={4} />
                  <Tool $gap={4} $w={32} aria-label="Zeilenabstand"><LineSpacingIcon /><Caret /></Tool>
                </Row>
                <Row>
                  <Tool $w={22} aria-label="Einzug verkleinern"><IndentIcon /></Tool>
                  <Tool $w={22} aria-label="Einzug vergrößern"><IndentIcon flip /></Tool>
                  <Divider $left={4} $right={4} />
                  <Tool $gap={4} aria-label="Spalten"><ColumnsIcon /><Caret /></Tool>
                </Row>
                <Row>
                  <Tool $w={22} $active aria-label="Linksbündig">
                    <Lines d="M1 2.500h14M1 5.500h10M1 8.500h14M1 11.500h10" />
                  </Tool>
                  <Tool $w={22} aria-label="Zentriert">
                    <Lines d="M1 2.500h14M3 5.500h10M1 8.500h14M3 11.500h10" />
                  </Tool>
                  <Tool $w={22} aria-label="Rechtsbündig">
                    <Lines d="M1 2.500h14M5 5.500h10M1 8.500h14M5 11.500h10" />
                  </Tool>
                  <Tool $w={22} aria-label="Blocksatz">
                    <Lines d="M1 2.500h14M1 5.500h14M1 8.500h14M1 11.500h14" />
                  </Tool>
                </Row>
              </Column>
              <Column>
                <Tool $gap={4} aria-label="Textrichtung"><DirectionIcon /><Caret /></Tool>
                <Tool $gap={4} aria-label="Text ausrichten"><AlignTextIcon /><Caret /></Tool>
                <Tool $gap={4} aria-label="In SmartArt konvertieren"><SmartArtIcon /><Caret /></Tool>
              </Column>
            </RibbonGroup>

            <RibbonGroup label="Zeichnen" w={239} pad={9} launcher>
              <LargeButton $w={44}>
                <LargeIcon><ShapesIcon /></LargeIcon>
                <Line>Formen</Line>
                <Line><Caret /></Line>
              </LargeButton>
              <LargeButton $w={60}>
                <LargeIcon><ArrangeIcon /></LargeIcon>
                <Line>Anordnen</Line>
                <Line><Caret /></Line>
              </LargeButton>
              <LargeButton $w={82}>
                <LargeIcon><StylesIcon /></LargeIcon>
                <Line>Schnellformat-</Line>
                <Line>vorlagen<Caret /></Line>
              </LargeButton>
              <Column>
                <Tool $gap={4} aria-label="Fülleffekt"><FillIcon /><Caret /></Tool>
                <Tool $gap={4} aria-label="Formkontur"><OutlineIcon /><Caret /></Tool>
                <Tool $gap={4} aria-label="Formeffekte"><EffectsIcon /><Caret /></Tool>
              </Column>
            </RibbonGroup>

            <RibbonGroup label="" w={73} pad={6}>
              <LargeButton $w={60}>
                <SearchTile><SearchIcon /></SearchTile>
                <Line>Bearbeiten</Line>
                <Line><Caret /></Line>
              </LargeButton>
            </RibbonGroup>

            <CollapseArea>
              <button aria-label="Menüband reduzieren">
                <Icon w={9} h={7} smooth><path d="M1 5.500l3.500-3.500L8 5.500" strokeWidth="2" /></Icon>
              </button>
            </CollapseArea>
          </Ribbon>

          <Workspace>
            <Slides>
              <SlideItem>
                <SlideNumber>1</SlideNumber>
                <Thumb aria-label="Folie 1">
                  <ThumbText $size={6} $gap={16} $center>PowerPoint effektiv</ThumbText>
                </Thumb>
              </SlideItem>
              <SlideItem>
                <SlideNumber>2</SlideNumber>
                <Thumb aria-label="Folie 2">
                  <ThumbText $size={5}>Design für PowerPoint</ThumbText>
                  <ThumbText $size={3} $gap={5}>• passend</ThumbText>
                  <ThumbText $size={3} $gap={1}>• sehen aus sehen</ThumbText>
                </Thumb>
              </SlideItem>
              <SlideItem $current>
                <SlideNumber>3</SlideNumber>
                <Thumb $current aria-label="Folie 3">
                  <ThumbText $size={5} $serif>EINSATZ VON SCHRIFTARTEN</ThumbText>
                  <ThumbText $size={3} $gap={5}>Mengentext gehorcht anderen Regeln wie Überschriften</ThumbText>
                </Thumb>
              </SlideItem>
            </Slides>
            <Canvas>
              <Slide>
                <Headline>
                  {"EINSATZ "}
                  <HeadlineBig $size={74}>V</HeadlineBig>
                  <HeadlineBig $size={62}>ON</HeadlineBig>
                  {" SCHRIFTARTEN"}
                </Headline>
                <BodyText>Mengentext gehorcht anderen Regeln wie Überschriften</BodyText>
              </Slide>
            </Canvas>
            <ScrollBar>
              <ScrollButton aria-label="Nach oben"><Triangle up /></ScrollButton>
              <ScrollTrack><ScrollThumb /></ScrollTrack>
              <ScrollButton aria-label="Nach unten"><Triangle /></ScrollButton>
              <SlideStep aria-label="Vorherige Folie"><DoubleTriangle up /></SlideStep>
              <SlideStep aria-label="Nächste Folie"><DoubleTriangle /></SlideStep>
            </ScrollBar>
          </Workspace>

          <StatusBar>
            <StatusText>Folie 3 von 3</StatusText>
            <SpellIcon />
            <StatusSpacer />
            <StatusButton $w={77} $gap={5}><NotesIcon />Notizen</StatusButton>
            <StatusButton $w={99} $gap={3}><CommentIcon />Kommentare</StatusButton>
            <ViewButton $w={38} $active aria-label="Normal"><NormalViewIcon /></ViewButton>
            <ViewButton $w={38} aria-label="Foliensortierung"><SorterIcon /></ViewButton>
            <ViewButton $w={38} aria-label="Leseansicht"><ReadingIcon /></ViewButton>
            <ViewButton $w={38} aria-label="Bildschirmpräsentation"><PresentIcon /></ViewButton>
            <ViewButton $w={14} aria-label="Verkleinern">
              <Icon w={7} h={7}><path d="M0 3h6v2H0z" fill={grey} stroke="none" /></Icon>
            </ViewButton>
            <ZoomSlider
              type="range"
              aria-label="Zoom"
              value={zoom}
              onChange={(e) => setZoom(Number(e.target.value))}
            />
            <ViewButton $w={14} aria-label="Vergrößern">
              <Icon w={8} h={8}><path d="M0 3h7v2H0zM3 0h2v8H3z" fill={grey} stroke="none" /></Icon>
            </ViewButton>
            <ZoomValue>58 %</ZoomValue>
            <ViewButton $w={24} aria-label="An Fenster anpassen"><FitIcon /></ViewButton>
          </StatusBar>
        </Window>
      </Desktop>
    </>
  );
};

export default App;
